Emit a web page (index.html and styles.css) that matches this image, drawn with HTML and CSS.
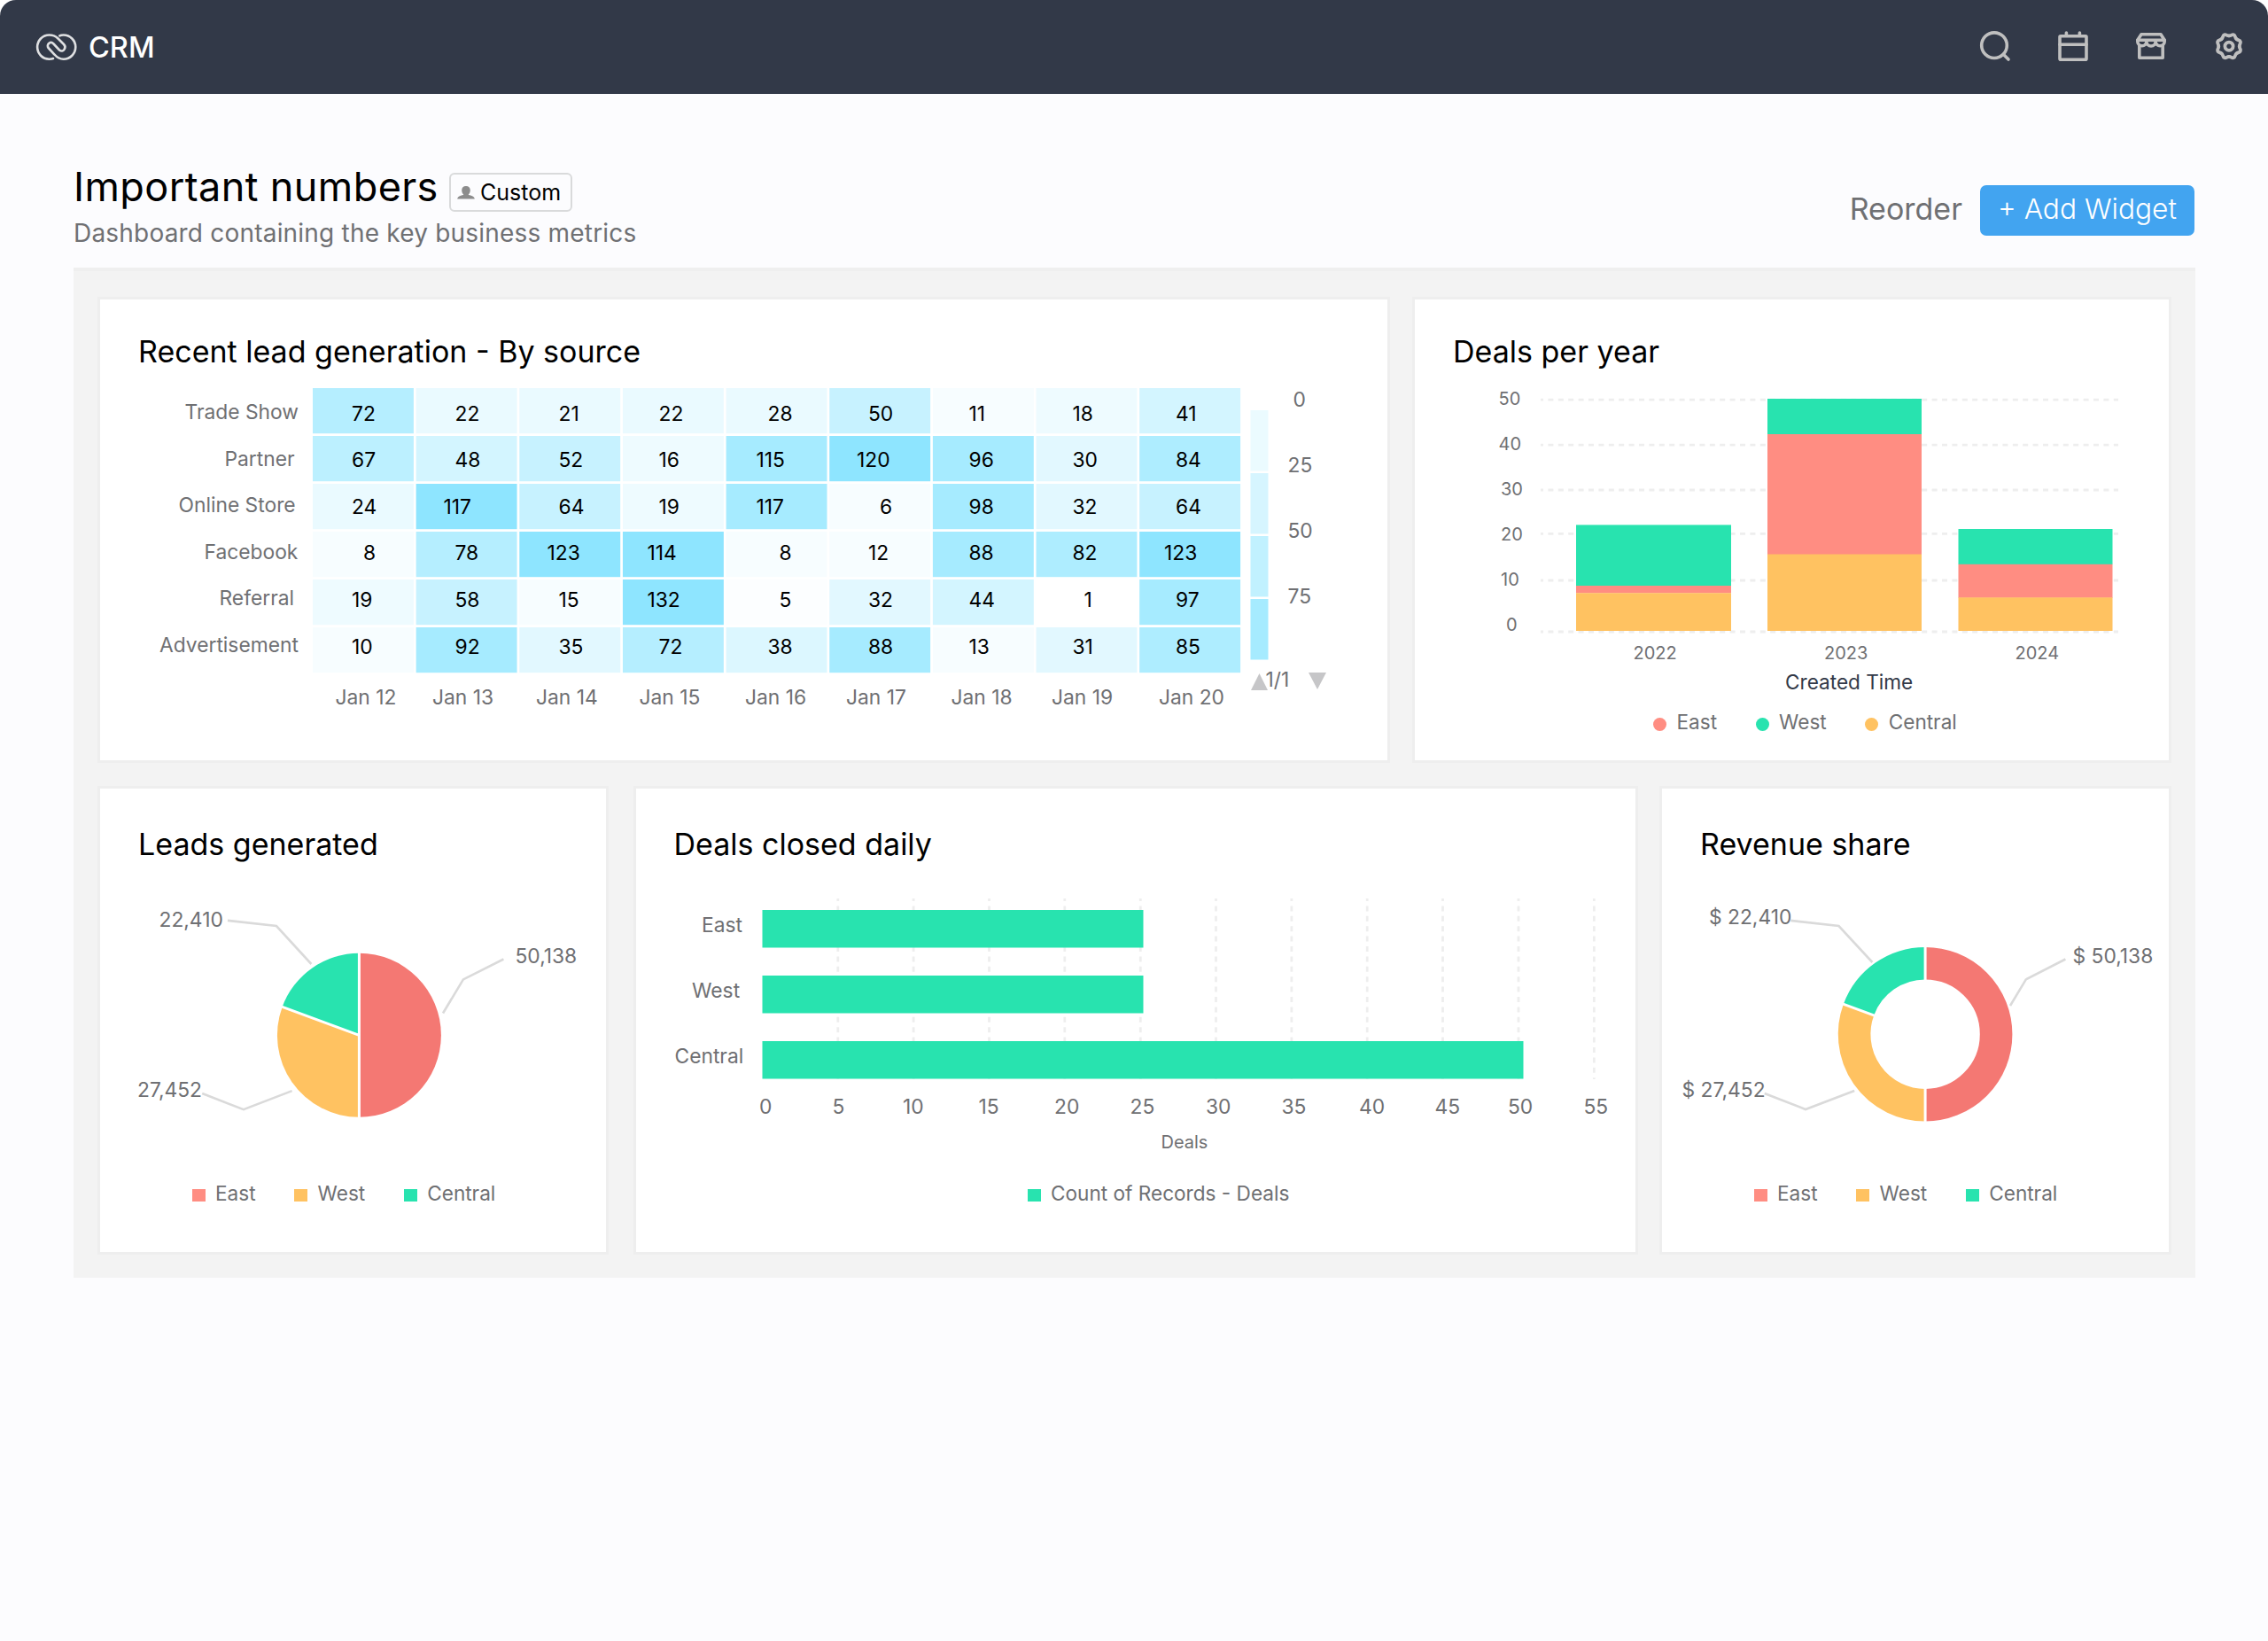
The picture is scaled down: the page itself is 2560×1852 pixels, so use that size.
FILE: index.html
```html
<!DOCTYPE html>
<html lang="en">
<head>
  <meta charset="UTF-8" />
  <meta name="viewport" content="width=device-width, initial-scale=1.0"/>
  <title>CRM - Important numbers</title>
  <link rel="stylesheet" href="styles.css">
</head>
<body>
  <header class="topbar">
    <div class="brand">
      <svg class="logo" width="48" height="34" viewBox="40 37 48 34">
        <path d="M60 67C58.5 67.6 57 67.7 55.5 67.7A13.4 13.6 0 0 1 55.5 40.5C59.5 40.5 62.5 41.5 65 44L72 51C75.5 54.5 71.5 61 67 57.5L60.5 50.5C56.5 46.5 51.5 52 55 55.5L61.5 62.5C64.5 66 67.5 67.7 71.7 67.7A13.6 13.6 0 0 0 71.7 40.5C70 40.5 68.5 40.7 67.3 41.4"/>
      </svg>
      <span>CRM</span>
    </div>
    <nav class="tools">
      <svg width="36" height="36" viewBox="2234 34 36 36">
        <circle cx="2251" cy="51.2" r="14.3"/>
        <path d="M2261.5 61.5L2267 67"/>
      </svg>
      <svg width="36" height="36" viewBox="2322 34 36 36">
        <rect x="2325" y="40.8" width="30" height="26.4" rx="1"/>
        <path d="M2325 50.3H2355M2332.4 37V40M2347.4 37V40"/>
      </svg>
      <svg width="36" height="36" viewBox="2410 34 36 36">
        <path d="M2412.8 45.2L2417 38.8H2439L2443.2 45.2Z"/>
        <path d="M2412.8 45.2V46.5A5 5 0 0 0 2422.9 47A5.1 5 0 0 0 2433.1 47A5 5 0 0 0 2443.2 46.5V45.2M2414.8 51V65.3H2441.2V51"/>
      </svg>
      <svg width="36" height="36" viewBox="-17.2 -17.4 34.4 34.4">
        <g id="gear-teeth">
          <path id="tooth" d="M0-11.2C2.8-11.2 3.06-13.13 5.09-12.29S5.94-9.9 7.92-7.92"/>
          <use href="#tooth" transform="rotate(45)"/>
          <use href="#tooth" transform="rotate(90)"/>
          <use href="#tooth" transform="rotate(135)"/>
        </g>
        <use href="#gear-teeth" transform="rotate(180)"/>
        <circle r="4.4"/>
      </svg>
    </nav>
  </header>

  <section class="page-head">
    <div>
      <div class="title-row">
        <h1>Important numbers</h1>
        <span class="badge">
          <svg width="20" height="15" viewBox="0 0 20 15"><path d="M10 0C13 0 14.8 2 14.8 4.8C14.8 7 13.8 8.8 12.7 9.5C13.5 10.7 19.5 10.5 19.8 14.5H0.2C0.5 10.5 6.5 10.7 7.3 9.5C6.2 8.8 5.2 7 5.2 4.8C5.2 2 7 0 10 0Z"/></svg>
          <span>Custom</span>
        </span>
      </div>
      <p class="subtitle">Dashboard containing the key business metrics</p>
    </div>
    <div class="actions">
      <a class="reorder">Reorder</a>
      <button class="add-widget">+ Add Widget</button>
    </div>
  </section>

  <main class="board">
    <div class="row">
      <div class="card card-heatmap">
        <h2>Recent lead generation - By source</h2>
        <svg class="chart" id="heatmap" width="1453" height="441" viewBox="113 417 1453 441"></svg>
      </div>

      <div class="card card-years">
        <h2>Deals per year</h2>
        <svg class="chart" width="851" height="384" viewBox="1597 417 851 384">
          <path class="grid-line" d="M1739 451.2H2391M1739 502.2H2391M1739 553H2391M1739 602.4H2391M1739 655H2391M1739 713H2391"/>
          <g class="axis small">
            <text x="1691.5" y="457">50</text>
            <text x="1691.5" y="508">40</text>
            <text x="1694" y="559">30</text>
            <text x="1694" y="609.5">20</text>
            <text x="1694" y="661">10</text>
            <text x="1700" y="711.5">0</text>
            <text x="1843.5" y="744">2022</text>
            <text x="2059" y="744">2023</text>
            <text x="2274.5" y="744">2024</text>
          </g>
          <g class="west">
            <rect x="1779" y="592.4" width="175" height="69"/>
            <rect x="1995" y="450" width="174" height="40"/>
            <rect x="2210.5" y="597" width="174" height="40"/>
          </g>
          <g class="east">
            <rect x="1779" y="661" width="175" height="8.5"/>
            <rect x="1995" y="490" width="174" height="136"/>
            <rect x="2210.5" y="636.8" width="174" height="38"/>
          </g>
          <g class="central">
            <rect x="1779" y="669.3" width="175" height="42.7"/>
            <rect x="1995" y="625.5" width="174" height="86.5"/>
            <rect x="2210.5" y="674.3" width="174" height="37.7"/>
          </g>
          <text class="axis-title" x="2015" y="777.5">Created Time</text>
        </svg>
        <div class="legend dots">
          <span class="item"><i class="bg-east"></i>East</span>
          <span class="item"><i class="bg-west"></i>West</span>
          <span class="item"><i class="bg-central"></i>Central</span>
        </div>
      </div>
    </div>

    <div class="row">
      <div class="card card-leads">
        <h2>Leads generated</h2>
        <svg class="chart" width="571" height="360" viewBox="113 973 571 360">
          <g transform="translate(405.4 1168.3)">
            <path class="pie-east" d="M0 0V-92.5A92.5 92.5 0 0 1 0 92.5Z"/>
            <path class="central" d="M0 0V92.5A92.5 92.5 0 0 1 -86.8 -31.9Z"/>
            <path class="west" d="M0 0L-86.8 -31.9A92.5 92.5 0 0 1 0 -92.5Z"/>
            <path class="gap" d="M0-94V94M0 0L-88.7-32.6"/>
          </g>
          <path class="leader" d="M257 1038.9L312 1045L351.4 1088M500 1143.5L522.9 1105.4L568.4 1082.5M228.2 1234L274.9 1252.2L329.6 1231.1"/>
          <g class="axis">
            <text x="179.5" y="1045.5">22,410</text>
            <text x="581.5" y="1087.3">50,138</text>
            <text x="155" y="1238">27,452</text>
          </g>
        </svg>
        <div class="legend">
          <span class="item"><i class="bg-east"></i>East</span>
          <span class="item"><i class="bg-central"></i>West</span>
          <span class="item"><i class="bg-west"></i>Central</span>
        </div>
      </div>

      <div class="card card-daily">
        <h2>Deals closed daily</h2>
        <svg class="chart" width="1128" height="360" viewBox="717.5 973 1128 360">
          <path class="grid-line" d="M945.3 1014V1218M1030.6 1014V1218M1116 1014V1218M1201.3 1014V1218M1286.8 1014V1218M1372 1014V1218M1457.4 1014V1218M1542.7 1014V1218M1628 1014V1218M1713.5 1014V1218M1798.8 1014V1218"/>
          <g class="west">
            <rect x="860" y="1027" width="430" height="42.5"/>
            <rect x="860" y="1101" width="430" height="42.5"/>
            <rect x="860" y="1175" width="859" height="42.5"/>
          </g>
          <g class="axis">
            <text x="791.5" y="1052">East</text>
            <text x="780.5" y="1126">West</text>
            <text x="761" y="1200">Central</text>
            <text x="856.5" y="1257">0</text>
            <text x="939" y="1257">5</text>
            <text x="1018.5" y="1257">10</text>
            <text x="1104" y="1257">15</text>
            <text x="1189.5" y="1257">20</text>
            <text x="1275" y="1257">25</text>
            <text x="1360.5" y="1257">30</text>
            <text x="1446" y="1257">35</text>
            <text x="1533.5" y="1257">40</text>
            <text x="1619" y="1257">45</text>
            <text x="1701.5" y="1257">50</text>
            <text x="1787" y="1257">55</text>
          </g>
          <text class="axis small" x="1310" y="1295.5">Deals</text>
        </svg>
        <div class="legend">
          <span class="item"><i class="bg-west"></i>Count of Records - Deals</span>
        </div>
      </div>

      <div class="card card-revenue">
        <h2>Revenue share</h2>
        <svg class="chart" width="572" height="360" viewBox="1876 973 572 360">
          <path class="leader" d="M2021.2 1038.9L2075.5 1045L2113.4 1086M2269 1135L2286.8 1105.4L2331.4 1082.5M1991.7 1234L2038 1252L2093.2 1231"/>
          <g class="donut" transform="translate(2173.1 1167.2)">
            <path class="ring-east" d="M0-80A80 80 0 0 1 0 80"/>
            <path class="ring-central" d="M0 80A80 80 0 0 1 -75.1 -27.6"/>
            <path class="ring-west" d="M-75.1 -27.6A80 80 0 0 1 0 -80"/>
            <path class="gap" d="M0-100V-58M0 58V100M-54-19.9L-94-34.6"/>
          </g>
          <g class="axis">
            <text x="1929" y="1042.8">$ 22,410</text>
            <text x="2339.5" y="1087.3">$ 50,138</text>
            <text x="1898.5" y="1238">$ 27,452</text>
          </g>
        </svg>
        <div class="legend">
          <span class="item"><i class="bg-east"></i>East</span>
          <span class="item"><i class="bg-central"></i>West</span>
          <span class="item"><i class="bg-west"></i>Central</span>
        </div>
      </div>
    </div>
  </main>

  <script>
    // x = left edge of a two digit value, labelX = left edge of the date
    const days = [
      { label: "Jan 12", x: 397, labelX: 378.5 },
      { label: "Jan 13", x: 513.5, labelX: 488 },
      { label: "Jan 14", x: 630.5, labelX: 605 },
      { label: "Jan 15", x: 743.5, labelX: 721.5 },
      { label: "Jan 16", x: 866.5, labelX: 841 },
      { label: "Jan 17", x: 980, labelX: 955 },
      { label: "Jan 18", x: 1093.5, labelX: 1073.5 },
      { label: "Jan 19", x: 1210.5, labelX: 1187 },
      { label: "Jan 20", x: 1327, labelX: 1308 }
    ];

    const sources = [
      { label: "Trade Show", x: 208.5, values: [72, 22, 21, 22, 28, 50, 11, 18, 41] },
      { label: "Partner", x: 253.5, values: [67, 48, 52, 16, 115, 120, 96, 30, 84] },
      { label: "Online Store", x: 201.5, values: [24, 117, 64, 19, 117, 6, 98, 32, 64] },
      { label: "Facebook", x: 230.5, values: [8, 78, 123, 114, 8, 12, 88, 82, 123] },
      { label: "Referral", x: 247.5, values: [19, 58, 15, 132, 5, 32, 44, 1, 97] },
      { label: "Advertisement", x: 180, values: [10, 92, 35, 72, 38, 88, 13, 31, 85] }
    ];

    const scale = [
      [118, "#8ee5ff"], [86, "#a6ebff"], [80, "#aeedff"], [70, "#b5eeff"], [66, "#bcf0ff"],
      [50, "#c7f2ff"], [40, "#d3f5ff"], [36, "#dcf7ff"], [30, "#e2f8ff"], [20, "#eafaff"],
      [16, "#eefbff"], [6, "#f7fdff"], [2, "#fcfeff"], [0, "#ffffff"]
    ];

    function cellColor(value, col) {
      if (value >= 114 && col !== 4) return "#8ee5ff";
      if (value >= 114) return "#a6ebff";
      return scale.find(s => value >= s[0])[1];
    }

    function drawHeatmap() {
      let svg = "";
      sources.forEach((source, r) => {
        const textY = 474.5 + r * 52.6;
        svg += `<text class="axis" x="${source.x}" y="${textY - 1.5}">${source.label}</text>`;
        source.values.forEach((value, c) => {
          const shift = (2 - String(value).length) * 13;
          svg += `<rect x="${353 + c * 116.65}" y="${438 + r * 54}" width="113.9" height="51.2" fill="${cellColor(value, c)}"/>`;
          svg += `<text class="value" x="${days[c].x + shift}" y="${textY}">${value}</text>`;
        });
      });
      days.forEach(day => {
        svg += `<text class="axis" x="${day.labelX}" y="795">${day.label}</text>`;
      });

      // colour key on the right
      ["#ebfbff", "#d6f5ff", "#c1f1ff", "#a6ebff"].forEach((color, i) => {
        svg += `<rect x="1411.5" y="${463 + i * 71}" width="20" height="68.5" fill="${color}"/>`;
        svg += `<text class="axis" x="${i ? 1453.5 : 1459.5}" y="${459 + i * 74}">${i * 25}</text>`;
      });
      svg += `<path class="pager" d="M1412 779L1421.5 760L1431 779ZM1477 759H1497L1487 778Z"/>`;
      svg += `<text class="axis" x="1428.5" y="774.5">1/1</text>`;
      document.getElementById("heatmap").innerHTML = svg;
    }

    drawHeatmap();
  </script>
</body>
</html>
```
FILE: styles.css
```css
* {
  box-sizing: border-box;
}

html {
  background: #fff;
}

body {
  min-height: 100vh;
  margin: 0;
  background: linear-gradient(#fff 106px, #fcfcfe 106px);
  font-family: Inter, "Liberation Sans", sans-serif;
  color: #000;
}

h1, h2, p {
  margin: 0;
  font-weight: 400;
}

/* top bar */
.topbar {
  display: flex;
  justify-content: space-between;
  height: 106px;
  padding: 0 26px 0 40px;
  background: #323948;
  border-radius: 18px 18px 0 0;
}

.brand {
  display: flex;
  align-items: center;
  gap: 12px;
  color: #fff;
  font-size: 32.5px;
  font-weight: 450;
}

.logo path {
  fill: none;
  stroke: #dedfe1;
  stroke-width: 2.6;
  stroke-linecap: round;
}

.tools {
  display: flex;
  gap: 52px;
  padding-top: 34px;
}

.tools svg {
  fill: none;
  stroke: #bfbfbf;
  stroke-width: 3.6;
  stroke-linecap: round;
  stroke-linejoin: round;
}

/* page heading */
.page-head {
  display: flex;
  justify-content: space-between;
  height: 196px;
  padding: 77px 83px 0;
}

.title-row {
  display: flex;
}

h1 {
  width: 424px;
  font-size: 45px;
  line-height: 56px;
  letter-spacing: 0.4px;
  white-space: nowrap;
}

.badge {
  display: flex;
  align-items: center;
  gap: 6px;
  width: 139px;
  height: 44px;
  margin-top: 12px;
  padding-left: 7px;
  border: 2.5px solid #d9dadb;
  border-radius: 6px;
  font-size: 25px;
}

.badge path {
  fill: #8c8c8c;
}

.subtitle {
  margin-top: 7px;
  color: #6f7073;
  font-size: 28px;
  line-height: 34px;
  letter-spacing: 0.2px;
}

.actions {
  display: flex;
  gap: 20px;
  height: 57px;
  margin-top: 26px;
}

.reorder {
  color: #6f7073;
  font-size: 34px;
  line-height: 54px;
}

.add-widget {
  width: 242px;
  padding: 0 0 4px;
  border: none;
  border-radius: 7px;
  background: #42a4f0;
  color: #fff;
  font-family: inherit;
  font-size: 31.7px;
  font-weight: 330;
}

/* widgets */
.board {
  display: flex;
  flex-direction: column;
  gap: 26px;
  width: 2395px;
  height: 1140px;
  margin: 0 auto 0 83px;
  padding: 29px 27px 0;
  border-top: 4px solid #efefef;
  background: #f3f3f3;
}

.row {
  display: flex;
  justify-content: space-between;
}

.card {
  height: 526px;
  border: 3px solid #eee;
  background: #fff;
}

.row + .row .card {
  height: 529px;
}

.card h2 {
  margin: 39px 0 0 43px;
  font-size: 34px;
  line-height: 40px;
}

.row + .row h2 {
  margin-top: 42.5px;
  margin-bottom: 0.5px;
}

.card-heatmap { width: 1459px; }
.card-years { width: 857px; }
.card-leads { width: 577px; }
.card-daily { width: 1134px; margin-left: 3px; }
.card-revenue { width: 578px; }

.chart {
  display: block;
}

.axis {
  fill: #6f7073;
  font-size: 22.8px;
}

.axis.small,
.small text {
  font-size: 20px;
}

.axis-title {
  fill: #323948;
  font-size: 22.6px;
}

.value {
  font-size: 22.8px;
}

.pager {
  fill: #c6c6c8;
}

.grid-line {
  fill: none;
  stroke: #eee;
  stroke-width: 2.8;
  stroke-dasharray: 6 5.4;
  stroke-dashoffset: 3;
}

.leader {
  fill: none;
  stroke: #dadada;
  stroke-width: 2.6;
}

.gap {
  fill: none;
  stroke: #fff;
  stroke-width: 3;
}

.east { fill: #ff8d82; }
.west { fill: #28e3af; }
.central { fill: #ffc261; }
.pie-east { fill: #f47873; }

.donut {
  fill: none;
  stroke-width: 36.6;
}

.ring-east { stroke: #f47873; }
.ring-west { stroke: #28e3af; }
.ring-central { stroke: #ffc261; }

.bg-east { background: #ff8d82; }
.bg-west { background: #28e3af; }
.bg-central { background: #ffc261; }

.legend {
  display: flex;
  gap: 43.5px;
  margin-left: 103.5px;
  color: #6f7073;
  font-size: 22.6px;
  line-height: 28px;
}

.legend .item {
  display: flex;
  gap: 11.5px;
}

.legend i {
  width: 15px;
  height: 14px;
  margin-top: 9px;
}

.dots {
  margin-left: 269px;
}

.dots i {
  height: 15px;
  border-radius: 50%;
}

.card-daily .legend {
  margin-left: 442px;
}
```
